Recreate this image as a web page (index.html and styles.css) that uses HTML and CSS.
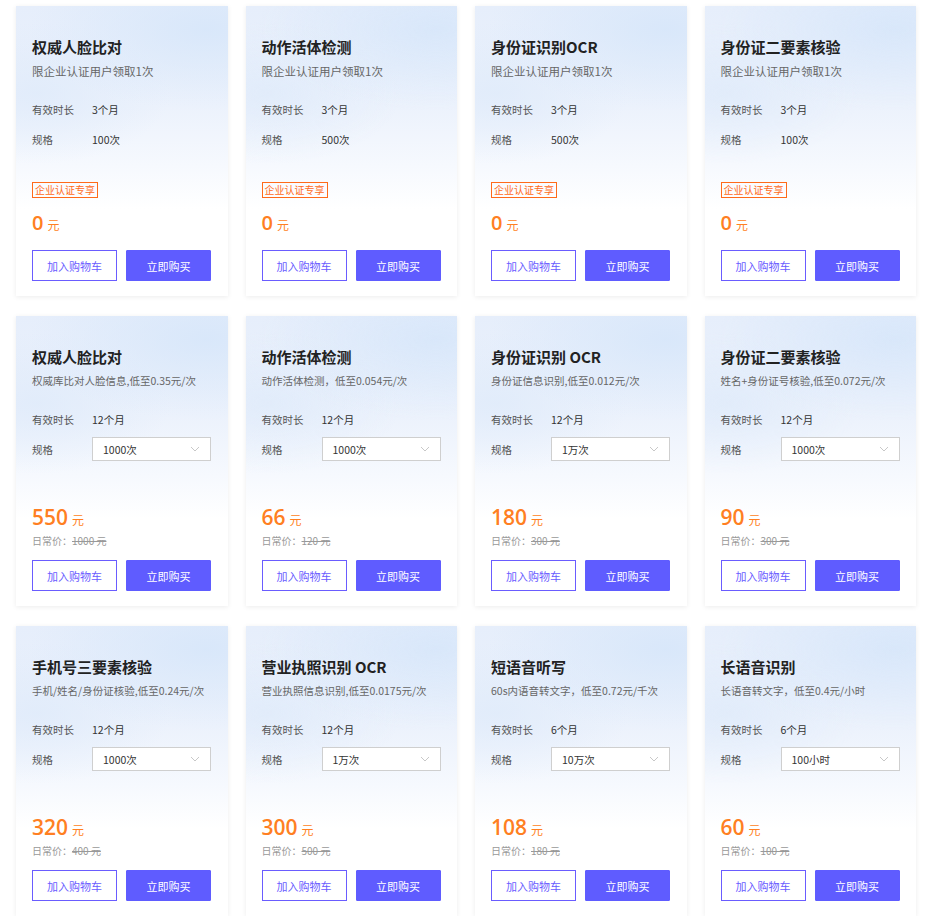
FILE: index.html
```html
<!DOCTYPE html>
<html lang="zh-CN">
<head>
<meta charset="utf-8">
<title>产品套餐</title>
<link rel="stylesheet" href="styles.css">
</head>
<body>
<div class="grid">
  <div class="card">
    <div class="title">权威人脸比对</div>
    <div class="desc">限企业认证用户领取1次</div>
    <div class="row"><span class="label">有效时长</span><span class="value">3个月</span></div>
    <div class="row"><span class="label">规格</span><span class="value">100次</span></div>
    <div class="bottom">
      <span class="tag">企业认证专享</span>
      <div class="price free"><span class="num">0</span><span class="unit">元</span></div>
      <div class="btns"><button class="btn cart">加入购物车</button><button class="btn buy">立即购买</button></div>
    </div>
  </div>
  <div class="card">
    <div class="title">动作活体检测</div>
    <div class="desc">限企业认证用户领取1次</div>
    <div class="row"><span class="label">有效时长</span><span class="value">3个月</span></div>
    <div class="row"><span class="label">规格</span><span class="value">500次</span></div>
    <div class="bottom">
      <span class="tag">企业认证专享</span>
      <div class="price free"><span class="num">0</span><span class="unit">元</span></div>
      <div class="btns"><button class="btn cart">加入购物车</button><button class="btn buy">立即购买</button></div>
    </div>
  </div>
  <div class="card">
    <div class="title">身份证识别OCR</div>
    <div class="desc">限企业认证用户领取1次</div>
    <div class="row"><span class="label">有效时长</span><span class="value">3个月</span></div>
    <div class="row"><span class="label">规格</span><span class="value">500次</span></div>
    <div class="bottom">
      <span class="tag">企业认证专享</span>
      <div class="price free"><span class="num">0</span><span class="unit">元</span></div>
      <div class="btns"><button class="btn cart">加入购物车</button><button class="btn buy">立即购买</button></div>
    </div>
  </div>
  <div class="card">
    <div class="title">身份证二要素核验</div>
    <div class="desc">限企业认证用户领取1次</div>
    <div class="row"><span class="label">有效时长</span><span class="value">3个月</span></div>
    <div class="row"><span class="label">规格</span><span class="value">100次</span></div>
    <div class="bottom">
      <span class="tag">企业认证专享</span>
      <div class="price free"><span class="num">0</span><span class="unit">元</span></div>
      <div class="btns"><button class="btn cart">加入购物车</button><button class="btn buy">立即购买</button></div>
    </div>
  </div>

  <div class="card">
    <div class="title">权威人脸比对</div>
    <div class="desc sm">权威库比对人脸信息,低至0.35元/次</div>
    <div class="row"><span class="label">有效时长</span><span class="value">12个月</span></div>
    <div class="row"><span class="label">规格</span><span class="select">1000次<svg class="chev" viewBox="0 0 10 6"><path d="M1 1l4 4 4-4"/></svg></span></div>
    <div class="bottom">
      <div class="price"><span class="num">550</span><span class="unit">元</span></div>
      <div class="orig">日常价：<s>1000 元</s></div>
      <div class="btns"><button class="btn cart">加入购物车</button><button class="btn buy">立即购买</button></div>
    </div>
  </div>
  <div class="card">
    <div class="title">动作活体检测</div>
    <div class="desc sm">动作活体检测，低至0.054元/次</div>
    <div class="row"><span class="label">有效时长</span><span class="value">12个月</span></div>
    <div class="row"><span class="label">规格</span><span class="select">1000次<svg class="chev" viewBox="0 0 10 6"><path d="M1 1l4 4 4-4"/></svg></span></div>
    <div class="bottom">
      <div class="price"><span class="num">66</span><span class="unit">元</span></div>
      <div class="orig">日常价：<s>120 元</s></div>
      <div class="btns"><button class="btn cart">加入购物车</button><button class="btn buy">立即购买</button></div>
    </div>
  </div>
  <div class="card">
    <div class="title">身份证识别 OCR</div>
    <div class="desc sm">身份证信息识别,低至0.012元/次</div>
    <div class="row"><span class="label">有效时长</span><span class="value">12个月</span></div>
    <div class="row"><span class="label">规格</span><span class="select">1万次<svg class="chev" viewBox="0 0 10 6"><path d="M1 1l4 4 4-4"/></svg></span></div>
    <div class="bottom">
      <div class="price"><span class="num">180</span><span class="unit">元</span></div>
      <div class="orig">日常价：<s>300 元</s></div>
      <div class="btns"><button class="btn cart">加入购物车</button><button class="btn buy">立即购买</button></div>
    </div>
  </div>
  <div class="card">
    <div class="title">身份证二要素核验</div>
    <div class="desc sm">姓名+身份证号核验,低至0.072元/次</div>
    <div class="row"><span class="label">有效时长</span><span class="value">12个月</span></div>
    <div class="row"><span class="label">规格</span><span class="select">1000次<svg class="chev" viewBox="0 0 10 6"><path d="M1 1l4 4 4-4"/></svg></span></div>
    <div class="bottom">
      <div class="price"><span class="num">90</span><span class="unit">元</span></div>
      <div class="orig">日常价：<s>300 元</s></div>
      <div class="btns"><button class="btn cart">加入购物车</button><button class="btn buy">立即购买</button></div>
    </div>
  </div>

  <div class="card">
    <div class="title">手机号三要素核验</div>
    <div class="desc sm">手机/姓名/身份证核验,低至0.24元/次</div>
    <div class="row"><span class="label">有效时长</span><span class="value">12个月</span></div>
    <div class="row"><span class="label">规格</span><span class="select">1000次<svg class="chev" viewBox="0 0 10 6"><path d="M1 1l4 4 4-4"/></svg></span></div>
    <div class="bottom">
      <div class="price"><span class="num">320</span><span class="unit">元</span></div>
      <div class="orig">日常价：<s>400 元</s></div>
      <div class="btns"><button class="btn cart">加入购物车</button><button class="btn buy">立即购买</button></div>
    </div>
  </div>
  <div class="card">
    <div class="title">营业执照识别 OCR</div>
    <div class="desc sm">营业执照信息识别,低至0.0175元/次</div>
    <div class="row"><span class="label">有效时长</span><span class="value">12个月</span></div>
    <div class="row"><span class="label">规格</span><span class="select">1万次<svg class="chev" viewBox="0 0 10 6"><path d="M1 1l4 4 4-4"/></svg></span></div>
    <div class="bottom">
      <div class="price"><span class="num">300</span><span class="unit">元</span></div>
      <div class="orig">日常价：<s>500 元</s></div>
      <div class="btns"><button class="btn cart">加入购物车</button><button class="btn buy">立即购买</button></div>
    </div>
  </div>
  <div class="card">
    <div class="title">短语音听写</div>
    <div class="desc sm">60s内语音转文字，低至0.72元/千次</div>
    <div class="row"><span class="label">有效时长</span><span class="value">6个月</span></div>
    <div class="row"><span class="label">规格</span><span class="select">10万次<svg class="chev" viewBox="0 0 10 6"><path d="M1 1l4 4 4-4"/></svg></span></div>
    <div class="bottom">
      <div class="price"><span class="num">108</span><span class="unit">元</span></div>
      <div class="orig">日常价：<s>180 元</s></div>
      <div class="btns"><button class="btn cart">加入购物车</button><button class="btn buy">立即购买</button></div>
    </div>
  </div>
  <div class="card">
    <div class="title">长语音识别</div>
    <div class="desc sm">长语音转文字，低至0.4元/小时</div>
    <div class="row"><span class="label">有效时长</span><span class="value">6个月</span></div>
    <div class="row"><span class="label">规格</span><span class="select">100小时<svg class="chev" viewBox="0 0 10 6"><path d="M1 1l4 4 4-4"/></svg></span></div>
    <div class="bottom">
      <div class="price"><span class="num">60</span><span class="unit">元</span></div>
      <div class="orig">日常价：<s>100 元</s></div>
      <div class="btns"><button class="btn cart">加入购物车</button><button class="btn buy">立即购买</button></div>
    </div>
  </div>
</div>
</body>
</html>
```
FILE: styles.css
```css
* { box-sizing: border-box; }
html, body { margin: 0; padding: 0; background: #fff; }
body {
  font-family: "Noto Sans CJK SC", "Noto Sans", sans-serif;
  color: #333;
}
.grid {
  display: grid;
  grid-template-columns: repeat(4, 211.5px);
  grid-auto-rows: 290px;
  column-gap: 18px;
  row-gap: 20px;
  padding: 6px 0 0 16px;
}
.card {
  display: flex;
  flex-direction: column;
  padding: 30px 16px 15px 16px;
  background:
    radial-gradient(ellipse 120% 40% at 90% 8%, rgba(214,230,250,0.85), rgba(214,230,250,0) 70%),
    radial-gradient(ellipse 90% 35% at 10% 30%, rgba(222,234,250,0.75), rgba(222,234,250,0) 70%),
    linear-gradient(180deg, #e6eefb 0%, #ecf2fc 35%, #f6f9fe 55%, #ffffff 70%);
  box-shadow: 0 1px 5px rgba(0, 0, 0, 0.08);
}
.title {
  font-size: 15px;
  line-height: 22px;
  font-weight: 700;
  color: #222;
  white-space: nowrap;
}
.desc {
  margin-top: 4px;
  font-size: 11.5px;
  line-height: 18px;
  color: #666;
  white-space: nowrap;
}
.desc.sm { font-size: 10.5px; }
.row {
  display: flex;
  align-items: center;
  height: 24px;
  font-size: 10.5px;
}
.desc + .row { margin-top: 17px; }
.row + .row { margin-top: 6px; }
.label {
  width: 60px;
  flex: none;
  color: #555;
}
.value { color: #333; }
.select {
  display: flex;
  align-items: center;
  justify-content: space-between;
  width: 119px;
  height: 24px;
  padding: 0 10px 0 10px;
  border: 1px solid #cfcfcf;
  background: #fff;
  color: #333;
  font-size: 10.5px;
}
.chev {
  width: 10px;
  height: 6px;
  fill: none;
  stroke: #c8c8c8;
  stroke-width: 1;
}
.bottom {
  margin-top: auto;
  display: flex;
  flex-direction: column;
  align-items: flex-start;
}
.tag {
  display: inline-block;
  height: 16px;
  padding: 0 2px;
  border: 1px solid #ff6a1a;
  color: #ff6a1a;
  font-size: 10px;
  line-height: 14px;
}
.price {
  display: flex;
  align-items: baseline;
  color: #ff7f22;
  height: 26px;
  line-height: 26px;
}
.tag + .price { margin-top: 12px; }
.price .num {
  font-family: "Open Sans", "Noto Sans", sans-serif;
  font-size: 21px;
  font-weight: 600;
}
.price.free .num { font-size: 20px; }
.price .unit {
  margin-left: 4px;
  font-size: 12px;
}
.orig {
  margin-top: 4px;
  font-size: 10px;
  line-height: 14px;
  color: #999;
}
.orig s { color: #999; }
.btns {
  display: flex;
  gap: 9px;
  margin-top: 14px;
}
.orig + .btns { margin-top: 12px; }
.btn {
  width: 85px;
  height: 31px;
  padding: 0;
  font-family: "Noto Sans CJK SC", sans-serif;
  font-size: 11px;
  cursor: pointer;
  border-radius: 0;
}
.btn.cart {
  background: #fff;
  border: 1px solid #6a5cff;
  color: #6a5cff;
}
.btn.buy {
  background: #5f5cff;
  border: 1px solid #5f5cff;
  color: #fff;
  border-radius: 1px;
}
```
